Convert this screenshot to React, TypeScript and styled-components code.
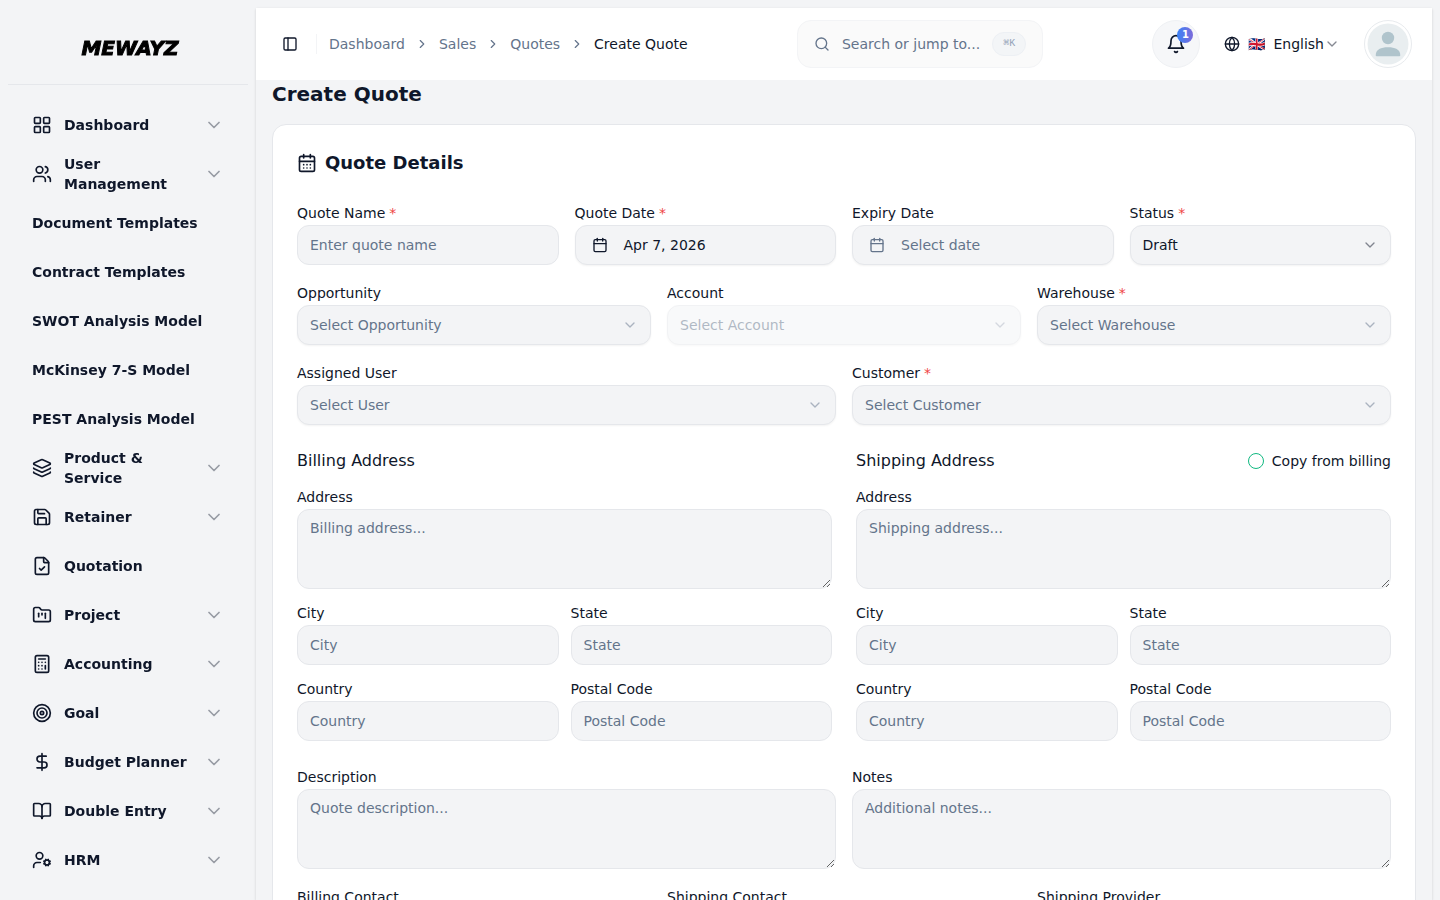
import React from "react";
import styled, { createGlobalStyle, css } from "styled-components";
import {
  BookOpen,
  Calculator,
  Calendar,
  CalendarDays,
  ChevronDown,
  ChevronRight,
  DollarSign,
  FileCheck,
  FolderKanban,
  Globe,
  Layers,
  LayoutGrid,
  PanelLeft,
  Save,
  Search,
  Target,
  UserCog,
  Users,
  type LucideIcon,
} from "lucide-react";

const color = {
  page: "#f3f4f6",
  ink: "#0f172a",
  muted: "#64748b",
  line: "#e5e7eb",
  red: "#ef4444",
  green: "#10b981",
};

const GlobalStyle = createGlobalStyle`
  *, *::before, *::after { box-sizing: border-box; }
  body {
    margin: 0;
    background: ${color.page};
    color: ${color.ink};
    font-family: "DejaVu Sans", sans-serif;
    font-size: 14px;
    line-height: 20px;
  }
  button, input, select, textarea { font: inherit; color: inherit; }
  button { cursor: pointer; }
  a { color: inherit; text-decoration: none; }
  svg { flex-shrink: 0; }
`;

const Shell = styled.div`
  display: flex;
  height: 100vh;
  overflow: hidden;
`;

/* Sidebar */

const Sidebar = styled.aside`
  display: flex;
  flex-direction: column;
  flex: 0 0 256px;
  padding: 8px;
  will-change: transform;
`;

const Brand = styled.a`
  display: flex;
  align-items: center;
  justify-content: center;
  flex: 0 0 77px;
  padding: 4px 0 0 4px;
  border-bottom: 1px solid ${color.line};
  color: #000;
  font-size: 20px;
  font-weight: 700;
  font-style: italic;
  -webkit-text-stroke: 1px #000;
`;

const Nav = styled.nav`
  display: flex;
  flex-direction: column;
  gap: 1px;
  flex: 1;
  min-height: 0;
  padding: 16px 8px 0;
  overflow-y: auto;
  scrollbar-width: none;
`;

const NavItem = styled.a`
  display: flex;
  align-items: center;
  gap: 12px;
  flex: 0 0 48px;
  padding: 0 16px;
  border-radius: 8px;
  font-weight: 700;
`;

const NavLabel = styled.span`
  flex: 1;
`;

const NavChevron = styled(ChevronDown)`
  opacity: 0.4;
`;

/* Main column */

const Main = styled.main`
  flex: 1;
  min-width: 0;
  margin: 8px 8px 0 0;
  overflow-y: auto;
  scrollbar-width: none;
  box-shadow: 0 1px 3px rgba(0, 0, 0, 0.1), 0 1px 2px rgba(0, 0, 0, 0.06);
`;

const Header = styled.header`
  position: sticky;
  top: 0;
  z-index: 1;
  display: flex;
  align-items: center;
  justify-content: space-between;
  height: 72px;
  padding: 0 20px;
  background: #fff;
`;

const HeaderGroup = styled.div<{ $gap: number }>`
  display: flex;
  align-items: center;
  gap: ${(p) => p.$gap}px;
`;

const ToggleButton = styled.button`
  display: grid;
  place-items: center;
  width: 28px;
  height: 28px;
  padding: 0;
  border: 0;
  background: none;
`;

const Divider = styled.span`
  width: 1px;
  height: 20px;
  background: ${color.page};
`;

const Crumbs = styled.nav`
  display: flex;
  align-items: center;
  gap: 10px;
  color: ${color.muted};
`;

const CurrentCrumb = styled.span`
  color: ${color.ink};
`;

const SearchButton = styled.button`
  display: flex;
  align-items: center;
  gap: 12px;
  height: 48px;
  padding: 0 16px;
  border: 1px solid ${color.page};
  border-radius: 14px;
  background: #fafafa;
  color: ${color.muted};
`;

const Shortcut = styled.kbd`
  display: grid;
  place-items: center;
  width: 34px;
  height: 24px;
  border: 1px solid #edf0f4;
  border-radius: 12px;
  background: #f3f5f7;
  color: #94a3b8;
  font: 10px/16px "Liberation Mono", monospace;
`;

const BellButton = styled.button`
  position: relative;
  display: grid;
  place-items: center;
  width: 48px;
  height: 48px;
  padding: 0;
  border: 1px solid #eff1f4;
  border-radius: 50%;
  background: #f6f7f9;
`;

const Badge = styled.span`
  position: absolute;
  top: 6px;
  right: 6px;
  width: 16px;
  height: 16px;
  border-radius: 50%;
  background: linear-gradient(90deg, #3b82f6, #7c6bda);
  color: #fff;
  font-size: 10px;
  font-weight: 700;
  line-height: 16px;
  text-align: center;
`;

const LanguageButton = styled.button`
  display: flex;
  align-items: center;
  gap: 8px;
  padding: 0;
  border: 0;
  background: none;
`;

const LanguageName = styled.span`
  display: flex;
  align-items: center;
`;

const FaintChevron = styled(ChevronDown)`
  opacity: 0.5;
`;

const AvatarButton = styled.button`
  display: grid;
  place-items: center;
  width: 48px;
  height: 48px;
  padding: 0;
  border: 1px solid #e8ebee;
  border-radius: 50%;
  background: #fff;
`;

const Content = styled.div`
  display: flex;
  flex-direction: column;
  gap: 16px;
  padding: 0 16px 16px;
`;

const PageTitle = styled.h1`
  margin: 0;
  font-size: 20px;
  line-height: 28px;
`;

const Card = styled.form`
  display: flex;
  flex-direction: column;
  gap: 16px;
  padding: 24px;
  border: 1px solid ${color.line};
  border-radius: 14px;
  background: #fff;
`;

const CardTitle = styled.h2`
  display: flex;
  align-items: center;
  gap: 8px;
  margin: 0 0 8px;
  font-size: 18px;
  line-height: 28px;
`;

/* Form parts */

const Grid = styled.div<{ $columns: number; $gap?: number }>`
  display: grid;
  grid-template-columns: repeat(${(p) => p.$columns}, minmax(0, 1fr));
  gap: ${(p) => p.$gap ?? 16}px;
`;

const AddressGrid = styled(Grid)`
  margin: 8px 0;
`;

const AddressColumn = styled.section`
  display: flex;
  flex-direction: column;
  gap: 12px;
`;

const AddressHead = styled.div`
  display: flex;
  align-items: center;
  justify-content: space-between;
`;

const AddressTitle = styled.h3`
  margin: 0;
  font-size: 16px;
  font-weight: 400;
  line-height: 24px;
`;

const CopyLabel = styled.label`
  display: flex;
  align-items: center;
  gap: 8px;
`;

const RoundCheck = styled.input`
  appearance: none;
  width: 16px;
  height: 16px;
  margin: 0;
  border: 1px solid ${color.green};
  border-radius: 50%;
  &:checked {
    background: ${color.green};
  }
`;

const FieldBox = styled.div`
  display: flex;
  flex-direction: column;
`;

const FieldLabel = styled.label`
  line-height: 24px;
`;

const Required = styled.span`
  margin-left: 4px;
  color: ${color.red};
`;

const control = css`
  width: 100%;
  border: 1px solid ${color.line};
  border-radius: 12px;
  background: ${color.page};
  outline-color: ${color.green};
  &::placeholder {
    color: ${color.muted};
    opacity: 1;
  }
`;

const TextInput = styled.input`
  ${control}
  height: 40px;
  padding: 0 12px;
`;

const TextArea = styled.textarea`
  ${control}
  display: block;
  height: 80px;
  padding: 8px 12px;
  resize: vertical;
`;

const DateButton = styled.button<{ $empty: boolean }>`
  ${control}
  display: flex;
  align-items: center;
  gap: 16px;
  height: 40px;
  padding: 0 16px;
  box-shadow: 0 1px 2px rgba(0, 0, 0, 0.05);
  color: ${(p) => (p.$empty ? color.muted : color.ink)};
`;

const SelectWrap = styled.div<{ $faded: boolean }>`
  display: grid;
  align-items: center;
  opacity: ${(p) => (p.$faded ? 0.5 : 1)};
  > * {
    grid-area: 1 / 1;
  }
  > svg {
    justify-self: end;
    margin-right: 13px;
    opacity: 0.5;
    pointer-events: none;
  }
`;

const SelectInput = styled.select<{ $empty: boolean }>`
  ${control}
  appearance: none;
  height: 40px;
  padding: 0 36px 0 12px;
  box-shadow: 0 1px 2px rgba(0, 0, 0, 0.05);
  color: ${(p) => (p.$empty ? color.muted : color.ink)};
  opacity: 1;
`;

type FieldProps = {
  id: string;
  label: string;
  required?: boolean;
  children: React.ReactNode;
};

function Field({ id, label, required, children }: FieldProps) {
  return (
    <FieldBox>
      <FieldLabel htmlFor={id}>
        {label}
        {required && <Required>*</Required>}
      </FieldLabel>
      {children}
    </FieldBox>
  );
}

type InputFieldProps = { id: string; label: string; hint?: string; required?: boolean };

function InputField({ id, label, hint, required }: InputFieldProps) {
  return (
    <Field id={id} label={label} required={required}>
      <TextInput id={id} type="text" placeholder={hint ?? label} />
    </Field>
  );
}

function AreaField({ id, label, hint }: InputFieldProps) {
  return (
    <Field id={id} label={label}>
      <TextArea id={id} placeholder={hint} />
    </Field>
  );
}

function DateField({ id, label, required, value }: InputFieldProps & { value?: string }) {
  return (
    <Field id={id} label={label} required={required}>
      <DateButton id={id} type="button" $empty={!value}>
        <Calendar size={16} />
        {value ?? "Select date"}
      </DateButton>
    </Field>
  );
}

type SelectFieldProps = InputFieldProps & { value?: string; disabled?: boolean };

function SelectField({ id, label, hint, required, value, disabled = false }: SelectFieldProps) {
  return (
    <Field id={id} label={label} required={required}>
      <SelectWrap $faded={disabled}>
        <SelectInput id={id} disabled={disabled} $empty={!value}>
          <option>{value ?? hint}</option>
        </SelectInput>
        <ChevronDown size={16} color={value ? color.ink : color.muted} />
      </SelectWrap>
    </Field>
  );
}

function AddressFields({ prefix, hint }: { prefix: string; hint: string }) {
  return (
    <>
      <AreaField id={`${prefix}-address`} label="Address" hint={hint} />
      <Grid $columns={2} $gap={12}>
        <InputField id={`${prefix}-city`} label="City" />
        <InputField id={`${prefix}-state`} label="State" />
        <InputField id={`${prefix}-country`} label="Country" />
        <InputField id={`${prefix}-postal`} label="Postal Code" />
      </Grid>
    </>
  );
}

/* Drawings */

function BellIcon() {
  return (
    <svg width="20" height="20" viewBox="0 0 24 24" fill="none" stroke="currentColor" strokeWidth="2" strokeLinecap="round" strokeLinejoin="round" aria-hidden="true">
      <path d="M6 8a6 6 0 0 1 12 0c0 7 3 9 3 9H3s3-2 3-9" />
      <path d="M10.3 21a1.94 1.94 0 0 0 3.4 0" />
    </svg>
  );
}

function Portrait() {
  return (
    <svg width="42" height="42" viewBox="0 0 42 42" aria-hidden="true">
      <circle cx="21" cy="21" r="20.5" fill="#e9eef0" />
      <circle cx="21" cy="15" r="6.2" fill="#b0c4cc" />
      <path d="M8.7 32.2C8.7 26.5 14 24.2 21 24.2S33.3 26.5 33.3 32.2Q33.3 33.2 32.3 33.2H9.7Q8.7 33.2 8.7 32.2Z" fill="#b0c4cc" />
    </svg>
  );
}

type NavEntry = { label: string; icon?: LucideIcon; expandable?: boolean };

const navEntries: NavEntry[] = [
  { label: "Dashboard", icon: LayoutGrid, expandable: true },
  { label: "User Management", icon: Users, expandable: true },
  { label: "Document Templates" },
  { label: "Contract Templates" },
  { label: "SWOT Analysis Model" },
  { label: "McKinsey 7-S Model" },
  { label: "PEST Analysis Model" },
  { label: "Product & Service", icon: Layers, expandable: true },
  { label: "Retainer", icon: Save, expandable: true },
  { label: "Quotation", icon: FileCheck },
  { label: "Project", icon: FolderKanban, expandable: true },
  { label: "Accounting", icon: Calculator, expandable: true },
  { label: "Goal", icon: Target, expandable: true },
  { label: "Budget Planner", icon: DollarSign, expandable: true },
  { label: "Double Entry", icon: BookOpen, expandable: true },
  { label: "HRM", icon: UserCog, expandable: true },
];

export default function App() {
  return (
    <>
      <GlobalStyle />
      <Shell>
        <Sidebar>
          <Brand href="#">MEWAYZ</Brand>
          <Nav aria-label="Main">
            {navEntries.map(({ label, icon: Icon, expandable }) => (
              <NavItem key={label} href="#">
                {Icon && <Icon size={20} />}
                <NavLabel>{label}</NavLabel>
                {expandable && <NavChevron size={20} />}
              </NavItem>
            ))}
          </Nav>
        </Sidebar>
        <Main>
          <Header>
            <HeaderGroup $gap={12}>
              <ToggleButton type="button" aria-label="Toggle sidebar">
                <PanelLeft size={16} />
              </ToggleButton>
              <Divider />
              <Crumbs aria-label="Breadcrumb">
                <a href="#">Dashboard</a>
                <ChevronRight size={14} />
                <a href="#">Sales</a>
                <ChevronRight size={14} />
                <a href="#">Quotes</a>
                <ChevronRight size={14} />
                <CurrentCrumb>Create Quote</CurrentCrumb>
              </Crumbs>
            </HeaderGroup>
            <SearchButton type="button">
              <Search size={16} />
              Search or jump to...
              <Shortcut>⌘K</Shortcut>
            </SearchButton>
            <HeaderGroup $gap={24}>
              <BellButton type="button" aria-label="Notifications">
                <BellIcon />
                <Badge>1</Badge>
              </BellButton>
              <LanguageButton type="button">
                <Globe size={16} />
                <span>🇬🇧</span>
                <LanguageName>
                  English
                  <FaintChevron size={16} />
                </LanguageName>
              </LanguageButton>
              <AvatarButton type="button" aria-label="Account">
                <Portrait />
              </AvatarButton>
            </HeaderGroup>
          </Header>
          <Content>
            <PageTitle>Create Quote</PageTitle>
            <Card>
              <CardTitle>
                <CalendarDays size={20} />
                Quote Details
              </CardTitle>
              <Grid $columns={4}>
                <InputField id="name" label="Quote Name" hint="Enter quote name" required />
                <DateField id="quote-date" label="Quote Date" value="Apr 7, 2026" required />
                <DateField id="expiry-date" label="Expiry Date" />
                <SelectField id="status" label="Status" value="Draft" required />
              </Grid>
              <Grid $columns={3}>
                <SelectField id="opportunity" label="Opportunity" hint="Select Opportunity" />
                <SelectField id="account" label="Account" hint="Select Account" disabled />
                <SelectField id="warehouse" label="Warehouse" hint="Select Warehouse" required />
              </Grid>
              <Grid $columns={2}>
                <SelectField id="user" label="Assigned User" hint="Select User" />
                <SelectField id="customer" label="Customer" hint="Select Customer" required />
              </Grid>
              <AddressGrid $columns={2} $gap={24}>
                <AddressColumn>
                  <AddressHead>
                    <AddressTitle>Billing Address</AddressTitle>
                  </AddressHead>
                  <AddressFields prefix="billing" hint="Billing address..." />
                </AddressColumn>
                <AddressColumn>
                  <AddressHead>
                    <AddressTitle>Shipping Address</AddressTitle>
                    <CopyLabel>
                      <RoundCheck type="checkbox" />
                      Copy from billing
                    </CopyLabel>
                  </AddressHead>
                  <AddressFields prefix="shipping" hint="Shipping address..." />
                </AddressColumn>
              </AddressGrid>
              <Grid $columns={2}>
                <AreaField id="description" label="Description" hint="Quote description..." />
                <AreaField id="notes" label="Notes" hint="Additional notes..." />
              </Grid>
              <Grid $columns={3}>
                <SelectField id="billing-contact" label="Billing Contact" hint="Select Contact" />
                <SelectField id="shipping-contact" label="Shipping Contact" hint="Select Contact" />
                <SelectField id="shipping-provider" label="Shipping Provider" hint="Select Provider" />
              </Grid>
            </Card>
          </Content>
        </Main>
      </Shell>
    </>
  );
}
